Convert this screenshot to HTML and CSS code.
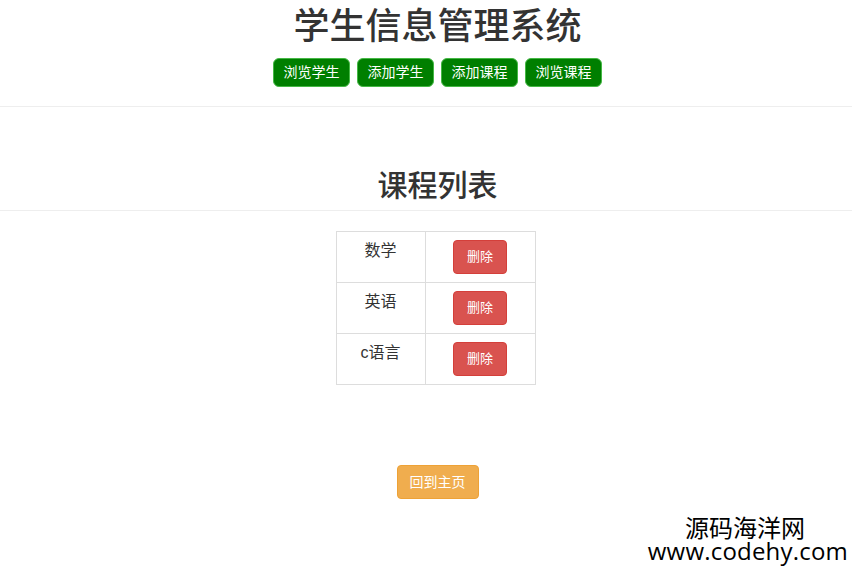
FILE: index.html
```html
<!DOCTYPE html>
<html lang="zh-CN">
<head>
    <meta charset="UTF-8">
    <title>课程列表</title>
    <link rel="stylesheet" href="styles.css">
</head>
<body>
    <header class="site-header">
        <div class="container">
            <h1 class="site-title">学生信息管理系统</h1>
            <nav class="nav-buttons">
                <a class="btn btn-green" href="#">浏览学生</a>
                <a class="btn btn-green" href="#">添加学生</a>
                <a class="btn btn-green" href="#">添加课程</a>
                <a class="btn btn-green" href="#">浏览课程</a>
            </nav>
        </div>
    </header>

    <section class="page-head">
        <div class="container">
            <h2 class="page-title">课程列表</h2>
        </div>
    </section>

    <main>
        <div class="table-wrap">
            <table class="course-table">
                <tr>
                    <td class="name-cell">数学</td>
                    <td class="action-cell"><a class="btn btn-danger" href="#">删除</a></td>
                </tr>
                <tr>
                    <td class="name-cell">英语</td>
                    <td class="action-cell"><a class="btn btn-danger" href="#">删除</a></td>
                </tr>
                <tr>
                    <td class="name-cell">c语言</td>
                    <td class="action-cell"><a class="btn btn-danger" href="#">删除</a></td>
                </tr>
            </table>
        </div>

        <div class="container back-row">
            <a class="btn btn-warning" href="#">回到主页</a>
        </div>
    </main>

    <div class="watermark">
        <div class="wm-name">源码海洋网</div>
        <div class="wm-url">www.codehy.com</div>
    </div>
</body>
</html>
```

FILE: styles.css
```css
* {
    box-sizing: border-box;
}

body {
    margin: 0;
    font-family: "Liberation Sans", "Noto Sans CJK SC", sans-serif;
    font-size: 14px;
    line-height: 1.42857;
    color: #333;
    background-color: #fff;
    position: relative;
    height: 569px;
    overflow: hidden;
}

.container {
    padding-left: 23px;
    text-align: center;
}

.site-header {
    border-bottom: 1px solid #eee;
    padding-bottom: 19px;
}

.site-title {
    margin: 0;
    padding-top: 7px;
    font-size: 36px;
    font-weight: 500;
    line-height: 40px;
}

.nav-buttons {
    display: flex;
    justify-content: center;
    gap: 7px;
    margin-top: 11px;
}

.btn {
    display: inline-block;
    padding: 6px 12px;
    font-size: 14px;
    line-height: 20px;
    border-radius: 4px;
    text-decoration: none;
    color: #fff;
    border: 1px solid transparent;
}

.btn-green {
    background-color: #007f00;
    border-color: #45b845;
    border-radius: 6px;
    padding: 4px 9.5px;
    line-height: 19px;
}

.btn-danger {
    background-color: #d9534f;
    border-color: #d43f3a;
    font-size: 13px;
    padding: 6px 13px;
}

.btn-warning {
    background-color: #f0ad4e;
    border-color: #eea236;
    padding: 6px 12px;
}

.page-head {
    border-bottom: 1px solid #eee;
    padding-top: 61px;
}

.page-title {
    margin: 0 0 6px;
    font-size: 30px;
    font-weight: 500;
    line-height: 36px;
}

.table-wrap {
    padding-left: 19px;
}

.course-table {
    margin: 20px auto 0;
    border-collapse: collapse;
    width: 200px;
}

.course-table td {
    border: 1px solid #ddd;
    padding: 8px;
    vertical-align: top;
    text-align: center;
}

.name-cell {
    width: 89px;
    font-size: 16px;
    line-height: 22px;
}

.back-row {
    margin-top: 80px;
}

.watermark {
    position: absolute;
    right: 4px;
    bottom: 6px;
    text-align: right;
    color: #000;
    font-family: "Noto Sans CJK SC", "Liberation Sans", sans-serif;
}

.wm-name {
    font-size: 24px;
    margin-right: 43px;
    line-height: 24px;
}

.wm-url {
    font-family: "Open Sans", "DejaVu Sans", sans-serif;
    font-size: 24px;
    line-height: 24px;
    letter-spacing: 0.2px;
}
```
